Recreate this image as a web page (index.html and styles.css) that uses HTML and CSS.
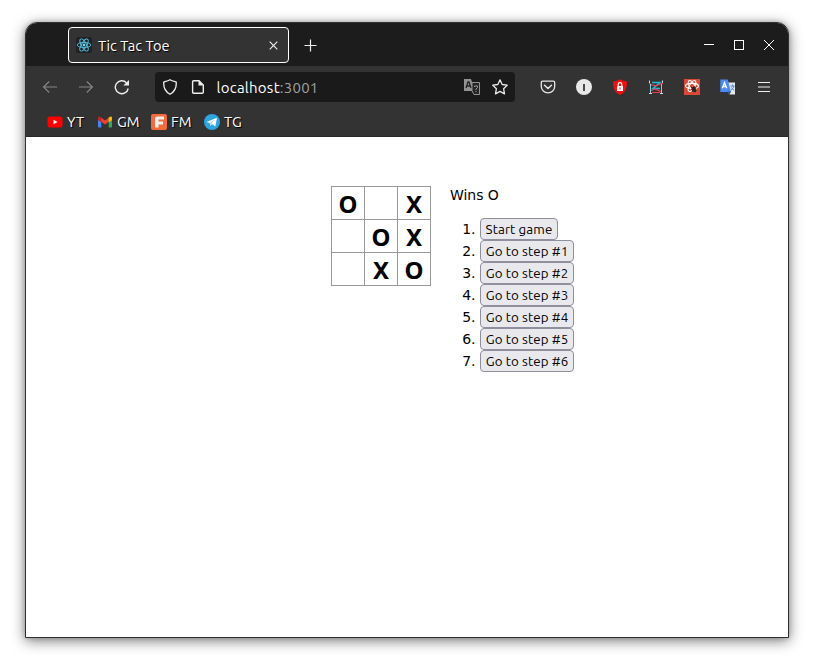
FILE: index.html
```html
<!DOCTYPE html>
<html lang="en">
<head>
<meta charset="utf-8">
<title>Tic Tac Toe</title>
<link rel="stylesheet" href="styles.css">
</head>
<body>
<div class="window">
  <header class="titlebar">
    <div class="tab">
      <svg class="favicon" width="16" height="16" viewBox="0 0 16 16"><rect width="16" height="16" rx="2" fill="#202326"/><g fill="none" stroke="#58bfdc" stroke-width=".9"><ellipse cx="8" cy="8" rx="6.8" ry="2.6"/><ellipse cx="8" cy="8" rx="6.8" ry="2.6" transform="rotate(60 8 8)"/><ellipse cx="8" cy="8" rx="6.8" ry="2.6" transform="rotate(120 8 8)"/></g><circle cx="8" cy="8" r="1.4" fill="#61dafb"/></svg>
      <span class="tab-title">Tic Tac Toe</span>
      <svg class="tab-close" width="9" height="9" viewBox="0 0 9 9"><path d="M.7.7l7.6 7.6M8.3.7L.7 8.3" stroke="#f2f2f2" stroke-width="1.1"/></svg>
    </div>
    <svg class="new-tab" width="13" height="13" viewBox="0 0 13 13"><path d="M6.5.5v12M.5 6.5h12" stroke="#eee" stroke-width="1.2"/></svg>
    <div class="controls">
      <svg width="10" height="10" viewBox="0 0 10 10"><path d="M0 4.5h10" stroke="#fff"/></svg>
      <svg width="10" height="10" viewBox="0 0 10 10"><rect x=".5" y=".5" width="9" height="9" fill="none" stroke="#fff"/></svg>
      <svg width="10" height="10" viewBox="0 0 10 10"><path d="M0 0l10 10M10 0L0 10" stroke="#fff"/></svg>
    </div>
  </header>
  <div class="toolbar">
    <div class="nav">
      <svg width="16" height="16" viewBox="0 0 16 16"><path d="M15 8H2M7.2 2.5L1.6 8l5.6 5.5" fill="none" stroke="#858585" stroke-width="1.2"/></svg>
      <svg width="16" height="16" viewBox="0 0 16 16"><path d="M1 8h13M8.8 2.5L14.4 8l-5.6 5.5" fill="none" stroke="#858585" stroke-width="1.2"/></svg>
      <svg width="16" height="16" viewBox="0 0 16 16"><path d="M14.2 9.5A6.5 6.5 0 1 1 12.5 3.7" fill="none" stroke="#eee" stroke-width="1.4"/><path d="M15 .9v5.7H9.3z" fill="#eee"/></svg>
    </div>
    <div class="urlbar">
      <svg width="16" height="16" viewBox="0 0 16 16"><path d="M8 .8C10 2 12.5 2.5 14.2 3c.5 5.500-1.200 9.500-6.200 12.300C3 12.500 1.300 8.500 1.800 3 3.500 2.500 6 2 8 .8z" fill="none" stroke="#eee" stroke-width="1.300"/></svg>
      <svg width="16" height="16" viewBox="0 0 16 16"><path d="M3.700 1.700h5.300l4.300 4.300v7.200q0 1.100-1.100 1.100H3.700q-1.100 0-1.100-1.100V2.800q0-1.100 1.100-1.100z" fill="none" stroke="#eee" stroke-width="1.400"/><path d="M8.500 1.500v5h5z" fill="#eee"/></svg>
      <span class="url">localhost<span class="port">:3001</span></span>
      <svg width="16" height="16" viewBox="0 0 16 16"><path d="M0 0h7l1 3h3v11l-3-2H0z" fill="#929292"/><path d="M8 3.500h7.500v12H10L8 12z" fill="#242424" stroke="#929292"/><path d="M2 9l2-6h1l2 6M3 7h3" fill="none" stroke="#222" stroke-width="1.300"/><path d="M10.500 8V7h3v1.500L12 10v1M12 12v1" fill="none" stroke="#999"/></svg>
      <svg width="16" height="16" viewBox="0 0 16 16"><path d="M8 .9l2.200 4.600 5 .7-3.600 3.500.9 5.200L8 12.400l-4.500 2.500.9-5.200L.8 6.200l5-.7z" fill="none" stroke="#e8e8e8" stroke-width="1.300" stroke-linejoin="round"/></svg>
    </div>
    <div class="extensions">
      <svg width="16" height="16" viewBox="0 0 16 16"><path d="M2.700 2.200h10.600q1.400 0 1.400 1.400V7.500a6.700 6.300 0 0 1-13.400 0V3.600q0-1.400 1.400-1.400z" fill="none" stroke="#e6e6e6" stroke-width="1.300"/><path d="M4.500 6.200L8 9.500l3.500-3.300" fill="none" stroke="#e6e6e6" stroke-width="1.500" stroke-linecap="round"/></svg>
      <svg width="16" height="16" viewBox="0 0 16 16"><circle cx="8" cy="8" r="8" fill="#e8e8e8"/><path d="M8 5v7" stroke="#4a4a4a" stroke-width="2"/></svg>
      <svg width="16" height="16" viewBox="0 0 16 16"><path d="M8 .2Q11 2 15 2.400C15 9 13.500 13.500 8 16 2.500 13.500 1 9 1 2.400Q5 2 8 .2z" fill="#ed1010"/><rect x="5" y="7" width="6" height="5" rx=".5" fill="#fff"/><path d="M6.200 7V5.500a1.800 1.800 0 0 1 3.600 0V7" fill="none" stroke="#fff" stroke-width="1.200"/><path d="M8 8.500v2" stroke="#e11"/></svg>
      <svg width="16" height="16" viewBox="0 0 16 16"><path d="M1.500 1.500v3M14.500 1.500v3M1 14.500h3M12 14.500h3" fill="none" stroke="#d8dddd"/><path d="M4 3.500h8L5 9.500h7" fill="none" stroke="#20b8d5" stroke-width="1.600"/><path d="M1 4.500q4 2.500 8 2L15 4M2 12l5-2 7 3M4 13.500h8" fill="none" stroke="#e43e52" stroke-width="1.200"/><path d="M2.500 5v9M13.500 5v9" stroke="#7ed4df"/></svg>
      <svg width="16" height="16" viewBox="0 0 16 16"><path fill="#dc4836" d="M0 0h16v16H0z"/><g fill="none" stroke="#fff" stroke-width="1.100"><ellipse cx="8" cy="7" rx="6.500" ry="2.600"/><ellipse cx="8" cy="7" rx="6" ry="2.500" transform="rotate(60 8 7)"/><ellipse cx="8" cy="7" rx="6" ry="2.500" transform="rotate(120 8 7)"/></g><ellipse cx="10" cy="10.500" rx="2.200" ry="3" fill="#35211e" transform="rotate(-30 10 10.500)"/><path d="M7 8l5 5M7 11l5-3M8.500 13l2-6" stroke="#35211e"/></svg>
      <svg width="16" height="16" viewBox="0 0 16 16"><path d="M8 3.500h7v12H9.500l-2-3z" fill="#e4e7eb"/><path d="M.3.500h7.500L11 13H.3z" fill="#4c8bf5"/><path d="M7.500 12.500H11L9.500 15.500z" fill="#1c48a8"/><path d="M2.300 9.300L4.500 3.500l2.200 5.800M3 7.500h3" fill="none" stroke="#fff" stroke-width="1.300"/><path d="M10.500 7h4M12.500 5.500V7M14 7q-1 3-3 4M11.500 8.500l2.500 3" fill="none" stroke="#5686d6"/></svg>
      <svg width="16" height="16" viewBox="0 0 16 16"><path d="M2 3.500h12M2 8h12M2 12.500h12" stroke="#eee" stroke-width="1.200"/></svg>
    </div>
  </div>
  <nav class="bookmarks">
    <span class="bookmark yt"><svg width="16" height="16" viewBox="0 0 16 16"><rect x=".5" y="2.500" width="15" height="11" rx="2.500" fill="#f00"/><path d="M6.500 5.700v4.600l4-2.300z" fill="#fff"/></svg><span>YT</span></span>
    <span class="bookmark gm"><svg width="16" height="16" viewBox="0 0 16 16"><path d="M1 4l3.300 2.200V13.500H2q-1 0-1-1z" fill="#4285f4"/><path d="M15 4l-3.300 2.200V13.500H14q1 0 1-1z" fill="#34a853"/><path d="M4 3.500L8 6.500l4-3v4L8 10.500l-4-3z" fill="#ea4335"/><path d="M1 6V4q0-2 2-1.300l1.300.8v4.700z" fill="#c5221f"/><path d="M15 6V4q0-2-2-1.300l-1.300.8v4.700z" fill="#fbbc04"/></svg><span>GM</span></span>
    <span class="bookmark fm"><svg width="16" height="16" viewBox="0 0 16 16"><rect width="16" height="16" rx="2" fill="#f26b3a"/><path d="M4 13.500V5q0-2.500 2.500-2.500H13v3H7.500v2H12v3H7.500v3z" fill="#eee"/></svg><span>FM</span></span>
    <span class="bookmark tg"><svg width="16" height="16" viewBox="0 0 16 16"><circle cx="8" cy="8" r="8" fill="#2ca5e0"/><path d="M2.500 8L13 3.800 11.300 12.500 8 10l-1.700 2-.6-3z" fill="#fff"/><path d="M5.900 9l5-3.400L7.500 9.500l-1.200 2z" fill="#a9cfe6"/></svg><span>TG</span></span>
  </nav>
  <main class="game">
    <div class="board">
      <div class="square">O</div><div class="square"></div><div class="square">X</div>
      <div class="square"></div><div class="square">O</div><div class="square">X</div>
      <div class="square"></div><div class="square">X</div><div class="square">O</div>
    </div>
    <section class="info">
      <div class="status">Wins O</div>
      <ol>
        <li><button class="start">Start game</button></li>
        <li><button>Go to step #1</button></li>
        <li><button>Go to step #2</button></li>
        <li><button>Go to step #3</button></li>
        <li><button>Go to step #4</button></li>
        <li><button>Go to step #5</button></li>
        <li><button>Go to step #6</button></li>
      </ol>
    </section>
  </main>
</div>
</body>
</html>
```
FILE: styles.css
```css
* { box-sizing: border-box; }
body { margin: 0; padding: 22px 25px; background: #fff; overflow: hidden; font-family: Ubuntu, "Noto Sans", sans-serif; }
svg { display: block; flex: none; }
.window { width: 764px; height: 616px; border: 1px solid #303030; border-radius: 12px 12px 0 0; background: #fff; overflow: hidden; box-shadow: 0 3px 14px rgba(0,0,0,.5), 0 0 5px rgba(0,0,0,.2); }
.titlebar { height: 43px; background: #1c1c1c; display: flex; align-items: center; padding: 0 14px 0 42px; }
.tab { width: 221px; height: 36px; border: 1px solid #fff; border-radius: 4px; background: #333; display: flex; align-items: center; padding: 0 10px 0 7px; margin-top: 1px; }
.tab-title { margin: 2px 0 0 6px; font-size: 14.667px; line-height: 20px; color: #fff; text-shadow: 1px 1px 1px #000; white-space: nowrap; }
.tab-close { margin-left: auto; }
.new-tab { margin: 2px 0 0 15px; }
.controls { margin-left: auto; display: flex; gap: 20px; }
.toolbar { height: 42px; background: #333; display: flex; align-items: center; padding-left: 16px; }
.nav { display: flex; gap: 20px; width: 113px; }
.urlbar { width: 360px; height: 30px; border-radius: 4px; background: #1a1a1a; display: flex; align-items: center; gap: 12px; padding: 0 7px; }
.url { flex: 1; margin: 2px 0 0 -1.5px; font-size: 15px; letter-spacing: .25px; line-height: 20px; color: #fff; }
.port { color: #a0a0a0; }
.extensions { margin-left: 25px; display: flex; gap: 20px; }
.bookmarks { height: 29px; background: #333; border-bottom: 1px solid #292929; display: flex; padding: 0 0 0 21px; }
.bookmark { display: flex; align-items: center; gap: 4px; font-size: 14.667px; line-height: 20px; color: #fff; text-shadow: 1px 1px 1px #000; }
.yt { width: 50px; } .gm { width: 54px; } .fm { width: 53px; }
.game { display: flex; padding: 49px 0 0 305px; font: 14px/17px "DejaVu Sans", sans-serif; color: #000; }
.board { width: 100px; height: 100px; display: grid; grid-template: repeat(3, 33px) / repeat(3, 33px); }
.square { width: 34px; height: 34px; border: 1px solid #999; font: bold 24px/34px "Noto Sans", sans-serif; text-align: center; }
.info { margin-left: 19px; }
.status { height: 18px; line-height: 19px; letter-spacing: -.05px; }
ol { margin: 14px 0 0; padding-left: 30px; }
li { height: 22px; line-height: 18px; }
button { display: block; width: 94px; height: 22px; margin: 0; padding: 2px 0 0; border: 1px solid #8f8f9d; border-radius: 4px; background: #e9e9ed; color: #000; font: 13.333px/18px Ubuntu, "Noto Sans", sans-serif; letter-spacing: .1px; text-align: center; white-space: nowrap; }
.start { width: 78px; }
```
